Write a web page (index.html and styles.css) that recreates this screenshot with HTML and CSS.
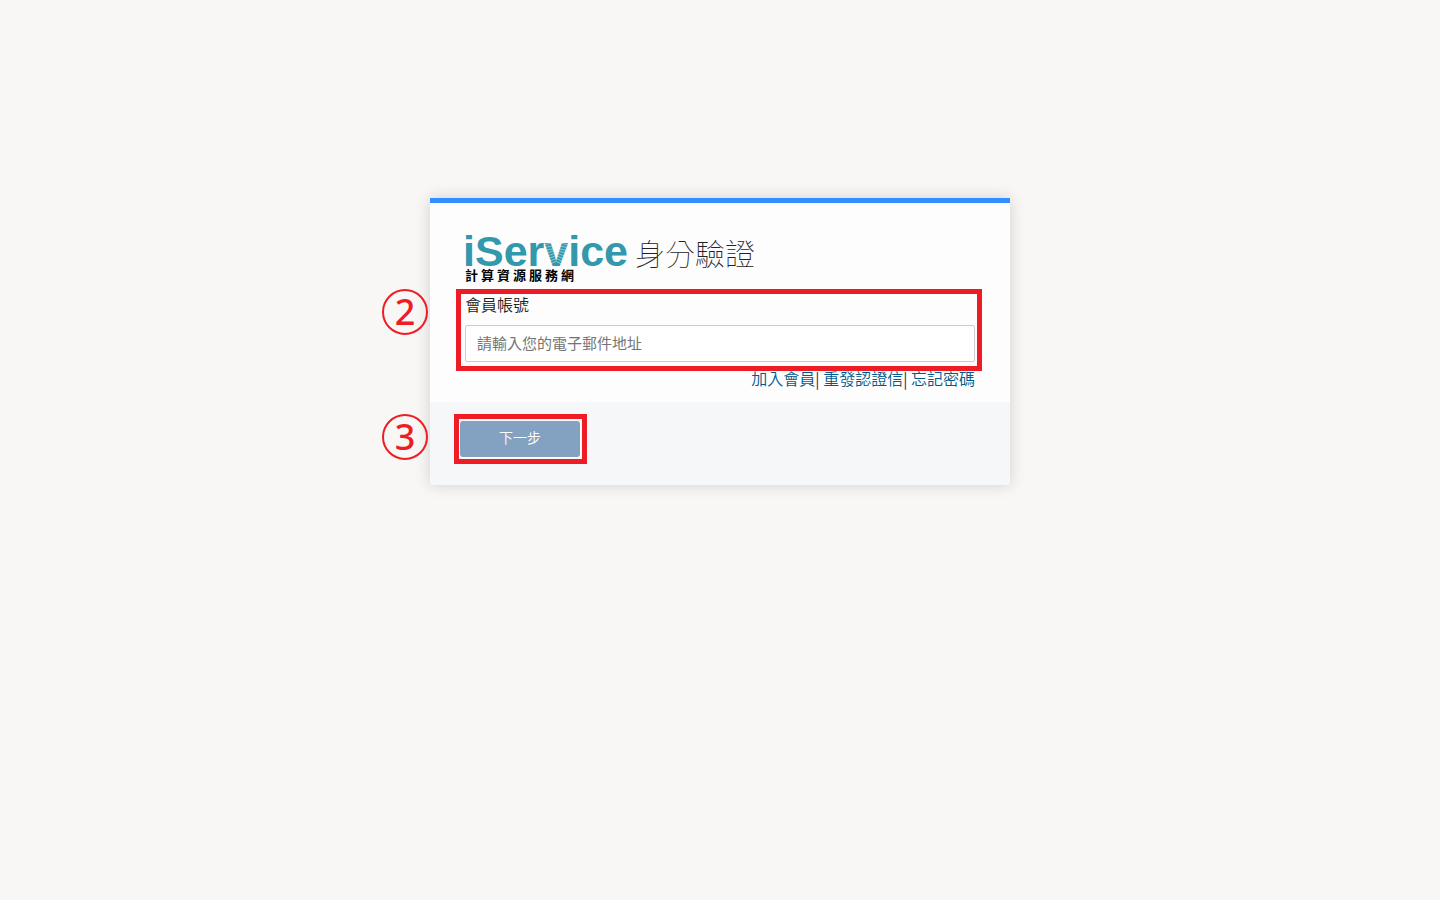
FILE: index.html
```
<!DOCTYPE html>
<html lang="zh-Hant">
<head>
<meta charset="utf-8">
<meta name="viewport" content="width=device-width, initial-scale=1">
<title>iService 身分驗證</title>
<link rel="stylesheet" href="styles.css">
</head>
<body>
<main class="page">
  <form class="card">
    <div class="card-body">
      <header class="card-header">
        <div class="logo">
          <span class="logo-name">iSer<span class="logo-v">v<svg class="logo-rays" viewBox="0 0 26 26" aria-hidden="true"><path d="M0 4l10-2M1 7l10-2M2 10l10-2M3 13l10-3M4 16l9-3M5 19l8-3M6 22l7-3M7 25l6-3M26 4l-10-2M25 7l-10-2M24 10l-10-2M23 13l-10-3M22 16l-9-3M21 19l-8-3M20 22l-7-3M19 25l-6-3"/></svg></span>ice</span>
          <span class="logo-sub">計算資源服務網</span>
        </div>
        <h1 class="title">身分驗證</h1>
      </header>
      <div class="field">
        <label class="field-label" for="account">會員帳號</label>
        <input class="field-input" id="account" type="email" placeholder="請輸入您的電子郵件地址">
        <span class="mark mark-field"></span>
        <span class="step"><svg viewBox="0 0 48 48" aria-hidden="true"><circle cx="24" cy="24" r="22"/></svg>2</span>
      </div>
      <nav class="links"><a href="#">加入會員</a>| <a href="#">重發認證信</a>| <a href="#">忘記密碼</a></nav>
    </div>
    <footer class="card-footer">
      <div class="action">
        <button class="next" type="button">下一步</button>
        <span class="mark mark-action"></span>
        <span class="step step-action"><svg viewBox="0 0 48 48" aria-hidden="true"><circle cx="24" cy="24" r="22"/></svg>3</span>
      </div>
    </footer>
  </form>
</main>
</body>
</html>
```
FILE: styles.css
```
* { box-sizing: border-box; }
body {
  margin: 0;
  background: #f9f7f5;
  color: #222;
  font: 350 16px/24px "Noto Sans CJK TC", sans-serif;
}
.page { padding: 198px 16px 48px; }
.card {
  max-width: 580px;
  margin: 0 auto;
  background: #fdfdfd;
  border-top: 5px solid #338fff;
  box-shadow: 0 0 14px rgba(0, 0, 0, .16);
}
.card-body { padding: 29px 35px 12px; }
.card-header { display: flex; gap: 7px; height: 54px; }
.logo { display: flex; flex-direction: column; margin-left: -2px; }
.logo-name {
  height: 35px;
  color: #3298ab;
  font: 700 43px/38px "Liberation Sans", sans-serif;
}
.logo-v { position: relative; }
.logo-rays {
  position: absolute;
  left: 0;
  bottom: 9px;
  width: 100%;
  height: 26px;
  fill: none;
  stroke: #fdfdfd;
  stroke-width: .5;
}
.logo-sub {
  margin-left: 2px;
  color: #000;
  font-size: 13px;
  font-weight: 700;
  line-height: 16px;
  letter-spacing: 3px;
}
.title {
  margin: 0;
  font-size: 30px;
  font-weight: 100;
  line-height: 40px;
}
.field { position: relative; margin-top: 6px; }
.field-label { display: block; line-height: 24px; }
.field-input {
  display: block;
  width: 100%;
  height: 37px;
  margin-top: 9px;
  padding: 0 11px 2px;
  border: 1px solid #ccc;
  border-radius: 2px;
  background: #fff;
  font: 15px/24px "Noto Sans CJK TC", sans-serif;
}
.field-input::placeholder { color: #757575; opacity: 1; }
.mark { position: absolute; border: 5px solid #ee1c25; pointer-events: none; }
.mark-field { inset: -3px -7px -9px -9px; }
.mark-action { inset: -7px -7px -7px -6px; }
.step {
  position: absolute;
  top: -4px;
  left: -84px;
  width: 48px;
  color: #ee1c25;
  font: 500 36px/48px "Noto Sans", sans-serif;
  text-align: center;
}
.step svg {
  position: absolute;
  inset: 0;
  fill: none;
  stroke: #ee1c25;
  stroke-width: 2;
}
.links { margin-top: 4px; text-align: right; }
.links a { color: #005a8c; text-decoration: none; }
.card-footer { padding: 19px 30px 28px; background: #f5f7f9; }
.action { position: relative; width: 120px; }
.next {
  display: block;
  width: 120px;
  height: 36px;
  padding: 0 0 4px;
  border: 0;
  border-radius: 3px;
  background: #83a1c1;
  box-shadow: 0 0 0 1px #fdfdfd;
  color: #fff;
  font: 350 14px/20px "Noto Sans CJK TC", sans-serif;
}
.step-action { left: -79px; top: -8px; }
```
